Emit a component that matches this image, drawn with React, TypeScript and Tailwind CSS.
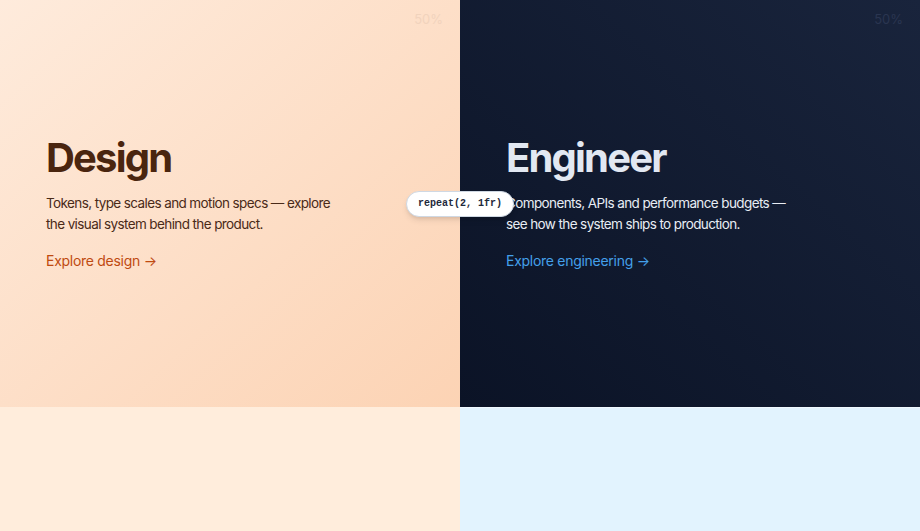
import React from "react";

export default function App() {
  return (
    <div
      className="relative grid h-screen grid-cols-2 overflow-hidden"
      style={{ fontFamily: "Inter, 'Noto Sans', sans-serif" }}
    >
      <div className="flex flex-col bg-[#ffeddc]">
        <section className="relative flex h-[407px] flex-col justify-center bg-gradient-to-br from-[#feebdc] to-[#fcd3b4] pl-[46px]">
          <span className="absolute right-[17px] top-[10px] text-[13px] text-[#f1d3bd]">50%</span>
          <h2 className="text-[40px] font-bold leading-[44px] tracking-[-0.045em] text-[#4a250f]">Design</h2>
          <p className="mt-[13px] max-w-[300px] text-[13.5px] leading-[21px] tracking-[-0.045em] text-[#4a2a18]">
            Tokens, type scales and motion specs — explore the visual system behind the product.
          </p>
          <a className="mt-[15px] text-[14px] leading-[22px] tracking-[-0.02em] text-[#bf4a10]">Explore design →</a>
        </section>
      </div>
      <div className="flex flex-col bg-[#e2f3fe]">
        <section className="relative flex h-[407px] flex-col justify-center bg-gradient-to-tr from-[#0b1326] to-[#19243c] pl-[46px]">
          <span className="absolute right-[17px] top-[10px] text-[13px] text-[#2a3550]">50%</span>
          <h2 className="text-[40px] font-bold leading-[44px] tracking-[-0.045em] text-[#e2e8f2]">Engineer</h2>
          <p className="mt-[13px] max-w-[300px] text-[13.5px] leading-[21px] tracking-[-0.045em] text-[#e8edf4]">
            Components, APIs and performance budgets — see how the system ships to production.
          </p>
          <a className="mt-[15px] text-[14px] leading-[22px] tracking-[-0.02em] text-[#44a0ea]">Explore engineering →</a>
        </section>
        <div className="h-px bg-[#f0f9ff]" />
      </div>
      <div className="absolute left-1/2 top-[203.5px] -translate-x-1/2 -translate-y-1/2 rounded-full border border-[#cfd8e3] bg-white px-[11px] py-[5px] text-[10px] font-bold leading-[14px] text-[#1e293b] shadow-md" style={{ fontFamily: "'Liberation Mono', monospace" }}>
        repeat(2, 1fr)
      </div>
    </div>
  );
}
